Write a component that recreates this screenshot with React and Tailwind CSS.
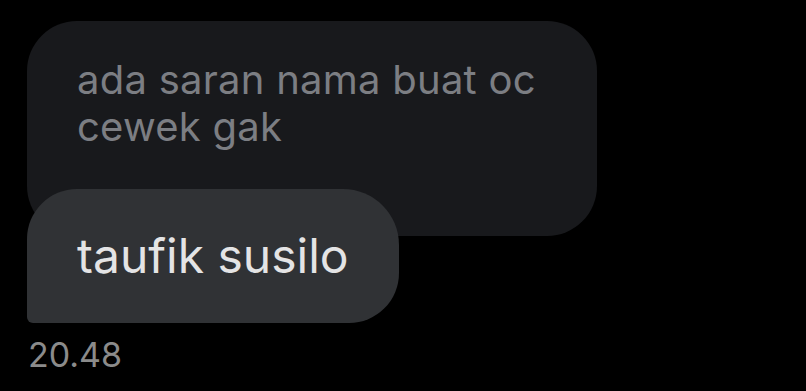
export default function App() {
  return (
    <div className="w-[806px] h-[391px] bg-black overflow-hidden" style={{ fontFamily: 'Inter, "Noto Sans", sans-serif' }}>
      <div className="flex flex-col items-start pl-[27px] pt-[21px]">
        <div className="w-[570px] h-[215px] bg-[#18191c] rounded-[50px] pl-[50px] pt-[35px] text-[#7c7e83] text-[40px] leading-[47px] tracking-[0.25px]">
          ada saran nama buat oc<br />cewek gak
        </div>
        <div className="-mt-[47px] w-[372px] h-[134px] bg-[#303235] rounded-tl-[50px] rounded-tr-[56px] rounded-br-[50px] rounded-bl-[6px] pl-[50px] pt-[42px] text-[#e4e4e5] text-[48px] leading-[50px]">
          taufik susilo
        </div>
        <div className="mt-[12px] pl-[1px] text-[#8b8b8b] text-[34px] leading-[40px]">20.48</div>
      </div>
    </div>
  );
}
